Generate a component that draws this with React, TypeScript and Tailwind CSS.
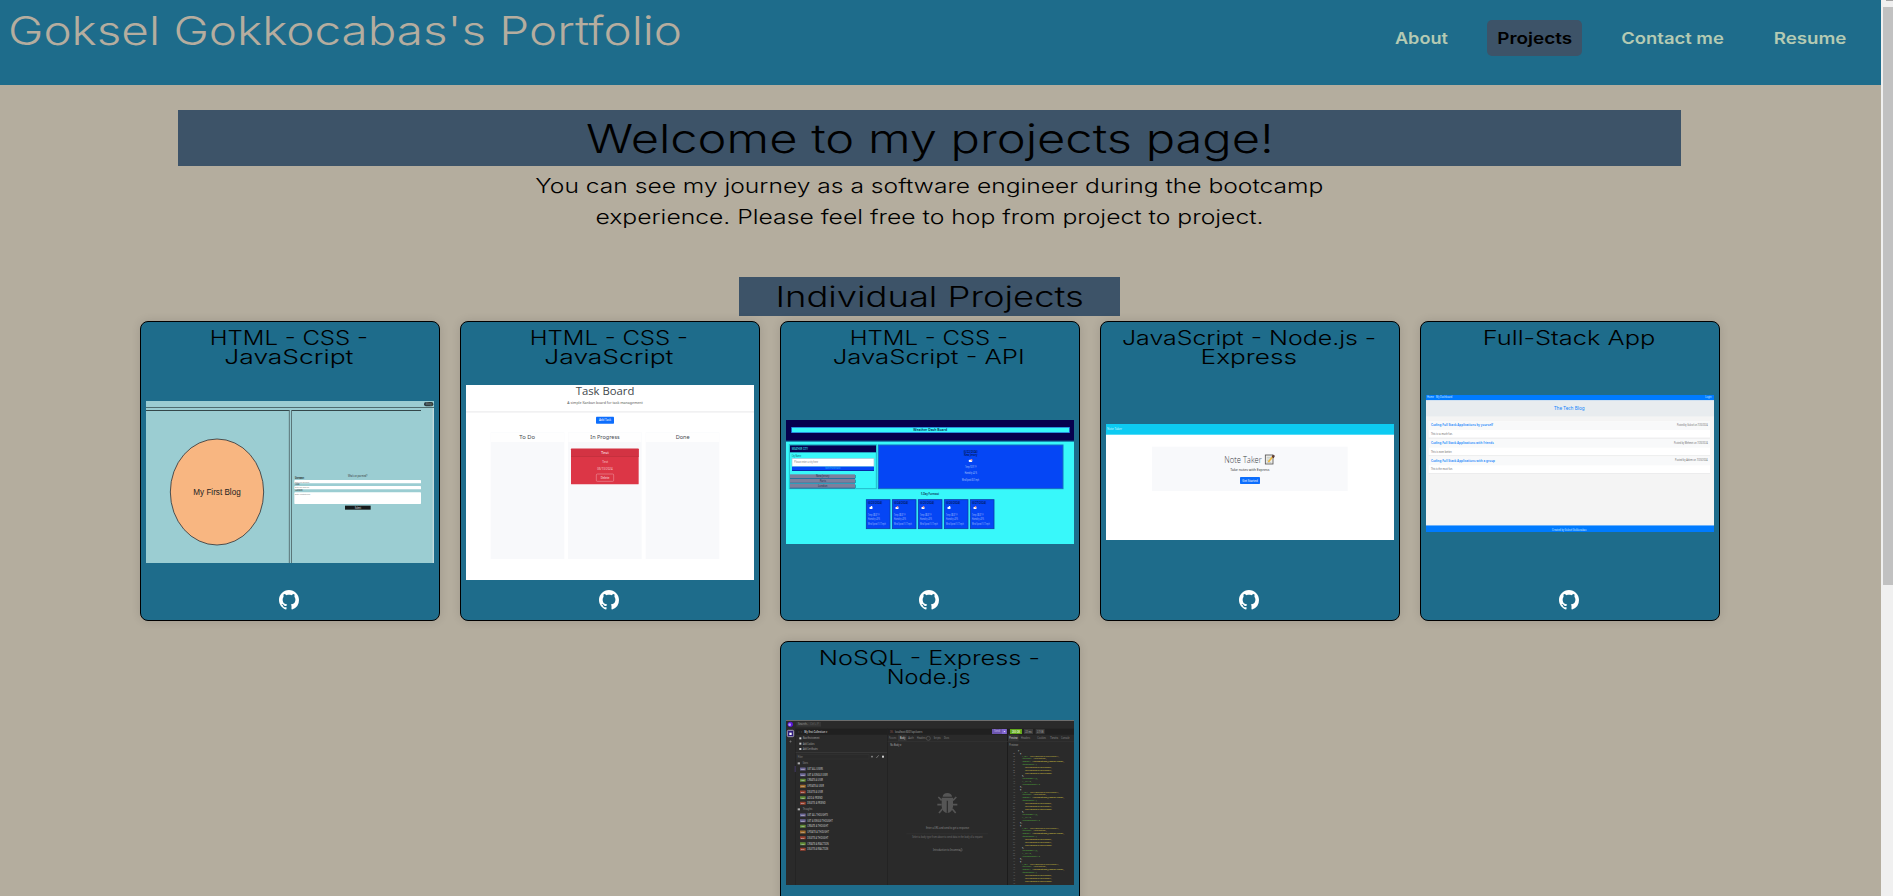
import React from "react";
import { BsGithub } from "react-icons/bs";

type LabelProps = {
  x: number;
  y: number;
  w: number;
  s: number;
  fill: string;
  weight?: number;
  font?: string;
  children: string;
};

function Label({ x, y, w, s, fill, weight = 400, font = "Noto Sans", children }: LabelProps) {
  return (
    <text
      x={x}
      y={y}
      textLength={w}
      lengthAdjust="spacingAndGlyphs"
      fontSize={s}
      fill={fill}
      fontWeight={weight}
      fontFamily={`"${font}", sans-serif`}
    >
      {children}
    </text>
  );
}

function BlogShot() {
  return (
    <svg viewBox="33 261 864 486" className="block w-full">
      <rect x="33" y="261" width="864" height="486" fill="#9bcdd2" />
      <rect x="33" y="279" width="864" height="3" fill="#4f6d70" />
      <rect x="33" y="288" width="431" height="3" fill="#33474a" />
      <rect x="471" y="288" width="387" height="3" fill="#33474a" />
      <rect x="461.5" y="288" width="3" height="459" fill="#5a7679" />
      <rect x="468" y="288" width="3" height="459" fill="#5a7679" />
      <rect x="893" y="282" width="4" height="465" fill="#c3dcde" />
      <rect x="867" y="264" width="28" height="13" rx="6" fill="#2e3c3f" />
      <Label x={872} y={274} w={18} s={9} fill="#7c8e90" font="Liberation Sans">Blog</Label>
      <ellipse cx="246" cy="534" rx="140" ry="159" fill="#f8b681" stroke="#27313a" strokeWidth="2.4" />
      <Label x={175} y={543} w={142} s={25} fill="#222" font="Liberation Sans">My First Blog</Label>
      <Label x={639} y={489} w={58} s={9} fill="#333" font="Liberation Sans">What's on your mind?</Label>
      <Label x={480} y={496} w={28} s={8} fill="#111" weight={700} font="Liberation Sans">Username:</Label>
      <Label x={480} y={514} w={15} s={8} fill="#111" font="Liberation Sans">Title:</Label>
      <Label x={480} y={532} w={24} s={8} fill="#111" font="Liberation Sans">Content:</Label>
      <rect x="478" y="498" width="380" height="10" rx="2" fill="#fff" />
      <rect x="478" y="516" width="380" height="10" rx="2" fill="#fff" />
      <rect x="478" y="535" width="380" height="35" rx="2" fill="#fff" />
      <Label x={480} y={506} w={43} s={7} fill="#777" font="Liberation Sans">Enter your username</Label>
      <Label x={480} y={523} w={43} s={7} fill="#777" font="Liberation Sans">Enter the blog title</Label>
      <Label x={480} y={542} w={46} s={7} fill="#777" font="Liberation Sans">Enter content here</Label>
      <rect x="630" y="575" width="77" height="12" fill="#151b1c" />
      <Label x={659} y={584} w={19} s={8} fill="#ddd" font="Liberation Sans">Submit</Label>
    </svg>
  );
}

const boardColumns: [number, string, number, number][] = [
  [107, "To Do", 193, 47],
  [339, "In Progress", 406, 88],
  [572, "Done", 662, 42],
];

function TaskShot() {
  return (
    <svg viewBox="33 210 864 585" className="block w-full overflow-visible">
      <rect x="33" y="210" width="864" height="585" fill="#fff" />
      <Label x={362} y={241} w={176} s={33} fill="#43484d" font="Open Sans" weight={500}>Task Board</Label>
      <Label x={337} y={266} w={226} s={12} fill="#555">A simple Kanban board for task management</Label>
      <rect x="33" y="288" width="864" height="5" fill="#f1f1f2" />
      <rect x="423" y="305" width="54" height="21" rx="2" fill="#0d6efd" />
      <Label x={432} y={319} w={36} s={10} fill="#fff">Add Task</Label>
      {boardColumns.map(([x, name, tx, tw]) => (
        <g key={name}>
          <rect x={x} y="352" width="221" height="380" fill="#f8f9fb" />
          <rect x={x + 1} y="353" width="219" height="28" fill="#fefefe" />
          <Label x={tx} y={373} w={tw} s={18} fill="#43484d">{name}</Label>
        </g>
      ))}
      <rect x="348" y="401" width="203" height="107" rx="2" fill="#dc3646" />
      <rect x="348" y="401" width="203" height="24" fill="#d33343" />
      <rect x="348" y="424" width="203" height="2" fill="#bf2f3d" />
      <Label x={438} y={417} w={24} s={12} fill="#f6cdd1" weight={600}>Test</Label>
      <Label x={442} y={443} w={17} s={10} fill="#f6cdd1">Test</Label>
      <Label x={427} y={465} w={46} s={10} fill="#f6cdd1">06/13/2024</Label>
      <rect x="424" y="477" width="52" height="22" rx="3" fill="none" stroke="#efa5ac" strokeWidth="1.5" />
      <Label x={437} y={491} w={26} s={10} fill="#fbe6e8">Delete</Label>
    </svg>
  );
}

const recentCities: [string, number, number, number][] = [
  ["New Jersey", 481, 123, 40],
  ["Paris", 495, 134, 19],
  ["London", 510, 129, 28],
];

const forecastDays: [number, string][] = [
  [274, "(6/23/2024)"],
  [352, "(6/24/2024)"],
  [430, "(6/25/2024)"],
  [508, "(6/26/2024)"],
  [586, "(6/27/2024)"],
];

function WeatherShot() {
  return (
    <svg viewBox="33 318 864 372" className="block w-full">
      <rect x="33" y="318" width="864" height="372" fill="#38f8fa" />
      <rect x="33" y="318" width="864" height="64" fill="#06004e" />
      <rect x="33" y="380" width="864" height="3" fill="#137fa6" />
      <rect x="48" y="339" width="837" height="18" fill="#1f5fd0" />
      <rect x="51" y="341" width="831" height="14" fill="#38f8fa" />
      <Label x={415} y={351} w={101} s={12} fill="#06204e" weight={600}>Weather Dash Board</Label>

      <rect x="43" y="392" width="261" height="132" fill="#38f8fa" stroke="#23b9c9" strokeWidth="3" />
      <rect x="45" y="394" width="258" height="21" fill="#06004e" />
      <Label x={50} y={407} w={49} s={9} fill="#2fd6dc" weight={600}>WEATHER CITY</Label>
      <Label x={50} y={428} w={28} s={9} fill="#0a5560">City Name</Label>
      <rect x="51" y="433" width="246" height="24" fill="#fff" stroke="#9ac4d9" strokeWidth="2" />
      <Label x={58} y={446} w={71} s={9} fill="#777">Please enter a city here</Label>
      <rect x="51" y="458" width="246" height="13" fill="#0546f5" />
      <rect x="51" y="468" width="246" height="3" fill="#072aa8" />
      <Label x={151} y={466} w={45} s={8} fill="#2fc6fa">Get Forecast</Label>
      {recentCities.map(([name, y, tx, tw]) => (
        <g key={name}>
          <rect x="45" y={y} width="195" height="12" fill="#7d7f9c" />
          <rect x="45" y={y + 11} width="195" height="3" fill="#2a6f9a" />
          <rect x="240" y={y + 2} width="3" height="10" fill="#1fa4b5" />
          <Label x={tx} y={y + 8} w={tw} s={8} fill="#222a48">{name}</Label>
        </g>
      ))}

      <rect x="310" y="393" width="554" height="131" fill="#0546f5" stroke="#156ec0" strokeWidth="3" />
      <Label x={566} y={416} w={42} s={8} fill="#03154f" weight={600}>(6/22/2024)</Label>
      <Label x={567} y={427} w={40} s={8} fill="#03154f" weight={600}>New Jersey</Label>
      <rect x="581" y="437" width="11" height="7" rx="3" fill="#fff" />
      <rect x="587" y="435" width="5" height="5" rx="2" fill="#e58b7e" />
      <Label x={571} y={461} w={33} s={8} fill="#bcd0fb">Temp: 92.91 °F</Label>
      <Label x={569} y={480} w={37} s={8} fill="#bcd0fb">Humidity: 42 %</Label>
      <Label x={561} y={501} w={51} s={8} fill="#bcd0fb">Wind Speed: 8.01 mph</Label>

      <Label x={438} y={543} w={54} s={10} fill="#0a2a4e" weight={600}>5-Day Forecast</Label>
      {forecastDays.map(([x, date], i) => (
        <g key={date}>
          <rect x={x} y="557" width="71" height="87" fill="#0546f5" stroke="#0b3dab" strokeWidth="2.5" />
          <Label x={x + 5} y={570} w={42} s={9} fill="#03154f" weight={600}>{date}</Label>
          <rect x={x + 9} y="579" width="10" height="6" rx="3" fill="#fff" />
          <rect x={x + 13} y="576" width="5" height="5" rx="2" fill={i % 3 === 0 ? "#fff" : "#e58b7e"} />
          <Label x={x + 5} y={605} w={34} s={8} fill="#a3befb">Temp: 88.87 °F</Label>
          <Label x={x + 5} y={619} w={36} s={8} fill="#a3befb">Humidity: 49 %</Label>
          <Label x={x + 5} y={633} w={53} s={8} fill="#a3befb">Wind Speed: 9.17 mph</Label>
        </g>
      ))}
    </svg>
  );
}

function NoteShot() {
  return (
    <svg viewBox="33 330 864 348" className="block w-full">
      <rect x="33" y="330" width="864" height="348" fill="#fff" />
      <rect x="33" y="330" width="864" height="33" fill="#0dcbf2" />
      <rect x="33" y="360" width="864" height="3" fill="#56dbf5" />
      <Label x={36} y={348} w={45} s={11} fill="#d6f6fd">Note Taker</Label>
      <rect x="171" y="398" width="587" height="133" fill="#f8f9fb" />
      <Label x={388} y={446} w={112} s={27} fill="#3b4046" weight={300} font="Open Sans">Note Taker</Label>
      <rect x="511" y="423" width="23" height="27" fill="#f2f0ea" stroke="#555" strokeWidth="2.5" />
      <path d="M515 430h14M515 435h14M515 440h9M515 445h14" stroke="#9aa" strokeWidth="1.6" />
      <path d="M520 444l14-17" stroke="#f0b93a" strokeWidth="5" />
      <path d="M533 422l7 3-4 8-6-4z" fill="#5a3a35" />
      <Label x={406} y={472} w={117} s={13} fill="#333">Take notes with Express</Label>
      <rect x="435" y="489" width="60" height="21" rx="2" fill="#0d6efd" />
      <Label x={442} y={503} w={46} s={10} fill="#fff">Get Started</Label>
    </svg>
  );
}

const posts: [number, string, number, string, number, string, number][] = [
  [318, "Coding Full Stack Applications by yourself", 186, "Posted by Goksel on 7/20/2024", 786, "This is so much fun.", 65],
  [371, "Coding Full Stack Applications with friends", 188, "Posted by Mehmet on 7/20/2024", 777, "This is even better.", 63],
  [424, "Coding Full Stack Applications with a group", 192, "Posted by Adem on 7/20/2024", 780, "This is the most fun.", 65],
];

function TechShot() {
  return (
    <svg viewBox="33 239 864 412" className="block w-full">
      <rect x="33" y="239" width="864" height="412" fill="#f4f4f4" />
      <rect x="33" y="239" width="864" height="16" fill="#007bff" />
      <Label x={36} y={248} w={21} s={8} fill="#d6eaff">Home</Label>
      <Label x={63} y={248} w={49} s={8} fill="#d6eaff">My Dashboard</Label>
      <Label x={871} y={248} w={18} s={8} fill="#d6eaff">Login</Label>
      <rect x="33" y="255" width="864" height="48" fill="#e8ecef" />
      <Label x={417} y={284} w={92} s={17} fill="#1183fb">The Tech Blog</Label>
      {posts.map(([y, title, tw, by, bx, body, bw]) => (
        <g key={title}>
          <rect x="41" y={y} width="844" height="50" fill="#fff" />
          <rect x="41" y={y} width="844" height="26" fill="#f8f9fa" />
          <rect x="41" y={y + 49} width="844" height="2" fill="#e7e8e9" />
          <Label x={48} y={y + 15} w={tw} s={11.5} fill="#1b88fb" weight={600}>{title}</Label>
          <Label x={bx} y={y + 14} w={878 - bx} s={9} fill="#666">{by}</Label>
          <Label x={48} y={y + 41} w={bw} s={9} fill="#666">{body}</Label>
        </g>
      ))}
      <rect x="33" y="630" width="864" height="21" fill="#007bff" />
      <rect x="33" y="629" width="864" height="2" fill="#79b8fb" />
      <Label x={411} y={646} w={103} s={9} fill="#d6eaff">Created by Goksel Gokkocabas</Label>
    </svg>
  );
}

const requests: [number, string, string, string, number][] = [
  [402, "GET", "#6c6796", "GET ALL USERS", 47],
  [419, "GET", "#6c6796", "GET A SINGLE USER", 61],
  [436, "POST", "#5f8a37", "CREATE A USER", 47],
  [454, "PUT", "#a06c2c", "UPDATE A USER", 50],
  [471, "DEL", "#97402f", "DELETE A USER", 47],
  [488, "POST", "#5f8a37", "ADD A FRIEND", 46],
  [505, "DEL", "#97402f", "DELETE A FRIEND", 55],
  [540, "GET", "#6c6796", "GET ALL THOUGHTS", 62],
  [557, "GET", "#6c6796", "GET A SINGLE THOUGHT", 76],
  [574, "POST", "#5f8a37", "CREATE A THOUGHT", 63],
  [591, "PUT", "#a06c2c", "UPDATE A THOUGHT", 65],
  [608, "DEL", "#97402f", "DELETE A THOUGHT", 63],
  [626, "POST", "#5f8a37", "CREATE A REACTION", 64],
  [643, "DEL", "#97402f", "DELETE A REACTION", 63],
];

const jsonBlocks = [355, 463, 571, 679];

const shotBottom = 748;

const panelTabs: [number, number, string, string][] = [
  [342, 22, "Params", "#777"],
  [375, 16, "Body", "#ddd"],
  [400, 16, "Auth", "#888"],
  [426, 26, "Headers", "#888"],
  [476, 21, "Scripts", "#888"],
  [507, 15, "Docs", "#888"],
  [703, 25, "Preview", "#ddd"],
  [738, 27, "Headers", "#888"],
  [787, 26, "Cookies", "#888"],
  [825, 24, "Tests", "#888"],
  [858, 26, "Console", "#888"],
];

const jsonParts: [number, number, number, string, string][] = [
  [735, 2, 4, "#ccc", "{"],
  [741, 10, 18, "#4a9438", '"_id":'],
  [764, 10, 88, "#a3983a", '"6671f8c2a9d4e10b7c3f52a1",'],
  [741, 18, 30, "#4a9438", '"username":'],
  [775, 18, 40, "#a3983a", '"lernantino",'],
  [741, 26.5, 27, "#4a9438", '"email":'],
  [772, 26.5, 96, "#b3a63a", '"lernantino@gmail.com",'],
  [741, 35, 44, "#4a9438", '"thoughts": ['],
  [749, 43.5, 82, "#b3a63a", '"6671f8c2a9d4e10b7c3f52b0",'],
  [749, 52, 82, "#b3a63a", '"6671f8c2a9d4e10b7c3f52b1",'],
  [749, 60.5, 82, "#b3a63a", '"6671f8c2a9d4e10b7c3f52b2"'],
  [741, 69, 6, "#ccc", "],"],
  [741, 77, 48, "#4a9438", '"friends": [],'],
  [741, 85.5, 29, "#4a9438", '"__v": 0,'],
  [741, 94, 54, "#4a9438", '"friendCount": 0'],
  [735, 102, 6, "#ccc", "},"],
];

function JsonBlock({ y, n }: { y: number; n: number }) {
  return (
    <g>
      {jsonParts
        .filter(([, dy]) => y + dy < shotBottom)
        .map(([x, dy, w, fill, text]) => (
          <Label key={`${x}-${dy}`} x={x} y={y + dy} w={w} s={6} fill={fill} weight={700}>{text}</Label>
        ))}
      {Array.from({ length: 13 }, (_, i) => i)
        .filter((i) => y + 2 + i * 8.3 < shotBottom)
        .map((i) => (
          <Label key={i} x={714} y={y + 2 + i * 8.3} w={6} s={6} fill="#777">{String(n + i)}</Label>
        ))}
    </g>
  );
}

function ApiShot() {
  return (
    <svg viewBox="33 255 864 495" className="block w-full">
      <rect x="33" y="255" width="864" height="495" fill="#2a2a2a" />
      <rect x="33" y="255" width="864" height="3" fill="#6d6d6d" />
      <rect x="62" y="281" width="835" height="18" fill="#202020" />
      <rect x="60" y="281" width="2" height="469" fill="#222" />
      <rect x="336" y="281" width="2.5" height="469" fill="#222" />
      <rect x="696" y="281" width="3" height="469" fill="#1c1c1c" />
      <circle cx="46" cy="268" r="8" fill="#5a16d6" />
      <circle cx="44" cy="269" r="4" fill="#b99af2" />
      <rect x="37" y="286" width="19" height="19" rx="3" fill="#2f1c7c" stroke="#b9b5c4" strokeWidth="2.5" />
      <rect x="43" y="293" width="7" height="7" fill="#fff" />
      <path d="M43 319.5h7M46.5 316v7" stroke="#888" strokeWidth="1.5" />
      <rect x="64" y="261" width="74" height="14" fill="#363636" />
      <Label x={69} y={271} w={31} s={9} fill="#999">Search..</Label>
      <Label x={106} y={271} w={25} s={9} fill="#666">Ctrl + P</Label>
      <Label x={69} y={293} w={13} s={9} fill="#666">{"‹  ›"}</Label>
      <Label x={88} y={293} w={69} s={9} fill="#ccc" weight={600}>My first Collection ▾</Label>
      {([
        [310, "Base Environment", 49],
        [326, "Add Cookies", 34],
        [342, "Add Certificates", 44],
      ] as [number, string, number][]).map(([y, name, w]) => (
        <g key={name}>
          <rect x="73" y={y - 3} width="6" height="6" fill="#ccc" />
          <Label x={84} y={y + 3} w={w} s={9} fill="#aaa">{name}</Label>
        </g>
      ))}
      <rect x="62" y="351" width="274" height="2" fill="#3c3c3c" />
      <rect x="66" y="358" width="216" height="14" fill="none" stroke="#353535" strokeWidth="1.5" />
      <Label x={68} y={368} w={16} s={8} fill="#888">Filter</Label>
      <path d="M288 365h6M291 362v6" stroke="#bbb" strokeWidth="1.5" />
      <path d="M304 369l7-8" stroke="#999" strokeWidth="2" />
      <rect x="321" y="362" width="6" height="6" fill="#ccc" />
      <rect x="68" y="382" width="7" height="6" fill="#aaa" />
      <Label x={83} y={388} w={16} s={8} fill="#999">Users</Label>
      <rect x="68" y="520" width="7" height="6" fill="#aaa" />
      <Label x={83} y={526} w={29} s={8} fill="#999">Thoughts</Label>
      <rect x="59" y="393" width="3" height="18" fill="#443a68" />
      {requests.map(([y, verb, color, name, w]) => (
        <g key={name}>
          <rect x="75" y={y - 4.5} width="17" height="9" rx="1" fill={color} />
          <Label x={78} y={y + 2.5} w={11} s={6.5} fill="#ddd">{verb}</Label>
          <Label x={97} y={y + 3} w={w} s={8} fill="#a5a5a5" weight={600}>{name}</Label>
        </g>
      ))}
      <Label x={345} y={293} w={10} s={8} fill="#9a5a50">DEL</Label>
      <Label x={360} y={293} w={82} s={9} fill="#aaa">localhost:3001/api/users</Label>
      <rect x="651" y="282" width="44" height="15" fill="#6d56b0" />
      <rect x="681" y="282" width="14" height="15" fill="#8267d0" />
      <Label x={658} y={292} w={17} s={8} fill="#c9bdec">Send</Label>
      <path d="M685.5 288h6l-3 4z" fill="#e5def7" />
      <rect x="705" y="282" width="36" height="15" fill="#62a81c" />
      <Label x={711} y={293} w={24} s={8} fill="#eaf6dc" weight={600}>200 OK</Label>
      <rect x="747" y="282" width="27" height="15" fill="#3a3a3a" />
      <Label x={751} y={293} w={19} s={8} fill="#aaa">22 ms</Label>
      <rect x="782" y="282" width="27" height="15" fill="#3a3a3a" />
      <Label x={786} y={293} w={19} s={8} fill="#aaa">2.7 KB</Label>
      <rect x="369" y="299" width="26" height="19" fill="#353535" />
      <rect x="699" y="299" width="32" height="19" fill="#353535" />
      {panelTabs.map(([x, w, name, color]) => (
        <Label key={x} x={x} y={313} w={w} s={8} fill={color}>{name}</Label>
      ))}
      <circle cx="460" cy="310" r="6" fill="none" stroke="#777" strokeWidth="1.2" />
      <rect x="338" y="319" width="559" height="1.5" fill="#373737" />
      <Label x={346} y={333} w={34} s={8} fill="#aaa">No Body ▾</Label>
      <Label x={703} y={333} w={29} s={8} fill="#999">Preview ▾</Label>
      <g fill="#555" stroke="#555">
        <path d="M503 485a14 11 0 0 1 28 0z" stroke="none" />
        <path d="M500 488h34v26a17 20 0 0 1-34 0z" stroke="none" />
        <path d="M500 496l-10-10M534 496l10-10M500 509h-13M534 509h13M502 522l-10 12M532 522l10 12" strokeWidth="5" fill="none" />
        <path d="M517 497v36" stroke="#2a2a2a" strokeWidth="3.5" />
      </g>
      <Label x={453} y={583} w={129} s={9} fill="#8d8d8d">Enter a URL and send to get a response</Label>
      <rect x="394" y="596" width="245" height="1.5" fill="#363636" />
      <Label x={412} y={610} w={211} s={8} fill="#777">Select a body type from above to send data in the body of a request</Label>
      <Label x={474} y={647} w={82} s={8} fill="#8d8d8d">Introduction to Insomnia</Label>
      <path d="M557 641h4v7h-6v-5" stroke="#777" strokeWidth="1.3" fill="none" />
      <Label x={729} y={349} w={4} s={6} fill="#ccc">[</Label>
      {jsonBlocks.map((y, i) => (
        <JsonBlock key={y} y={y} n={2 + i * 13} />
      ))}
    </svg>
  );
}

type Line = [text: string, stretch: string];

const projects: { id: string; lines: Line[]; Shot: () => React.JSX.Element }[] = [
  { id: "blog", lines: [["HTML - CSS -", "scale-x-[1.2]"], ["JavaScript", "scale-x-[1.32]"]], Shot: BlogShot },
  { id: "tasks", lines: [["HTML - CSS -", "scale-x-[1.2]"], ["JavaScript", "scale-x-[1.32]"]], Shot: TaskShot },
  { id: "weather", lines: [["HTML - CSS -", "scale-x-[1.2]"], ["JavaScript - API", "scale-x-[1.285]"]], Shot: WeatherShot },
  { id: "notes", lines: [["JavaScript - Node.js -", "scale-x-[1.245]"], ["Express", "scale-x-[1.31]"]], Shot: NoteShot },
  { id: "tech", lines: [["Full-Stack App", "scale-x-[1.27]"]], Shot: TechShot },
  { id: "api", lines: [["NoSQL - Express -", "scale-x-[1.265]"], ["Node.js", "scale-x-[1.175]"]], Shot: ApiShot },
];

export default function App() {
  return (
    <div className="flex h-[896px] overflow-hidden bg-[#b4ad9e] font-['Inter',sans-serif] text-black">
      <div className="w-[1881px]">
        <header className="flex h-[85px] justify-between bg-[#1e6c8b] pl-2">
          <h1 className="origin-left scale-x-[1.19] pt-[7px] text-[40px] leading-[48px] font-light text-[#b5ad9f]">
            Goksel Gokkocabas's Portfolio
          </h1>
          <nav className="flex h-9 pt-5 pr-[25px] text-base leading-9 font-semibold text-[#b4cab3]">
            <a className="mr-[30px] flex h-9 w-[72px] justify-center"><span className="scale-x-[1.13]">About</span></a>
            <a className="mr-[30px] flex h-9 w-[95px] justify-center rounded-[5px] bg-[#3d5368] text-black">
              <span className="scale-x-[1.18]">Projects</span>
            </a>
            <a className="mr-[30px] flex h-9 w-[122px] justify-center"><span className="scale-x-[1.15]">Contact me</span></a>
            <a className="flex h-9 w-[92px] justify-center"><span className="scale-x-[1.17]">Resume</span></a>
          </nav>
        </header>

        <main className="flex flex-col items-center pr-[22px] pt-[25px]">
          <h2 className="flex h-14 w-[1503px] justify-center bg-[#3d5368] text-[40px] leading-[57px] font-light">
            <span className="block scale-x-[1.22]">Welcome to my projects page!</span>
          </h2>
          <div className="flex flex-col items-center pt-[5px] text-xl leading-[31px] font-light">
            <p className="scale-x-[1.23]">You can see my journey as a software engineer during the bootcamp</p>
            <p className="scale-x-[1.235]">experience. Please feel free to hop from project to project.</p>
          </div>
          <h3 className="mt-[44px] flex h-[39px] w-[381px] justify-center bg-[#3d5368] text-[28px] leading-[40px] font-light">
            <span className="block scale-x-[1.3]">Individual Projects</span>
          </h3>

          <section className="mt-[5px] flex w-[1600px] flex-wrap justify-center gap-5">
            {projects.map(({ id, lines, Shot }) => (
              <article
                key={id}
                className="flex h-[300px] w-[300px] flex-col rounded-lg border border-black bg-[#1e6c8b] px-[5px] pt-[7px] pb-[10px] shadow-[0_0_10px_rgba(0,0,0,0.12)]"
              >
                <h4 className="flex flex-col items-center pr-px text-xl leading-[19.2px] font-light">
                  {lines.map(([text, stretch]) => (
                    <span key={text} className={`block ${stretch}`}>{text}</span>
                  ))}
                </h4>
                <div className="mt-[15px] flex h-[200px] shrink-0 items-center">
                  <Shot />
                </div>
                <div className="mt-auto flex justify-center pr-px">
                  <BsGithub className="size-5 text-white" />
                </div>
              </article>
            ))}
          </section>
        </main>
      </div>
      <div className="flex w-3 flex-col items-end bg-[#f0f0f0]">
        <div className="h-px w-[7px] bg-[#a3a3a3]" />
        <div className="mt-[6px] h-[578px] w-[10px] bg-[#c1c1c1]" />
      </div>
    </div>
  );
}
